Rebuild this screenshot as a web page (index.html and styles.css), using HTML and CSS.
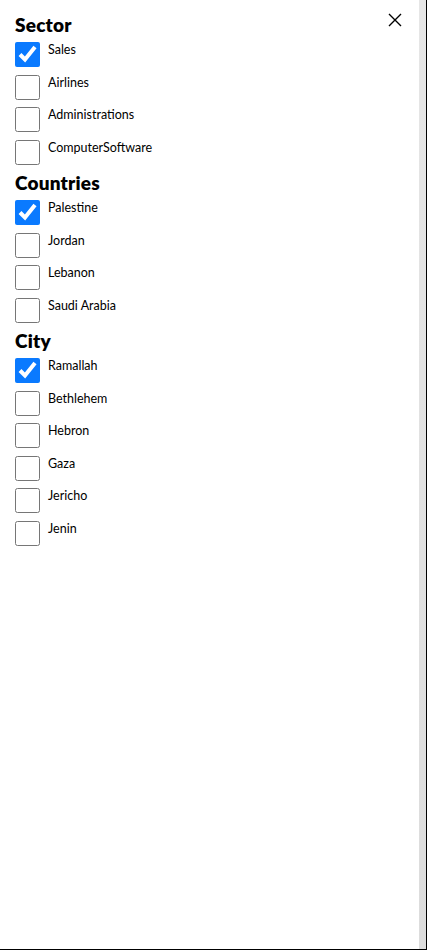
FILE: index.html
```html
<!DOCTYPE html>
<html>
<head>
<meta charset="utf-8">
<link rel="stylesheet" href="styles.css">
</head>
<body>
<div class="panel">
  <div class="content">
    <button class="close" aria-label="close">
      <svg width="14" height="14" viewBox="0 0 14 14"><path d="M1 1L13 13M13 1L1 13" stroke="#000" stroke-width="1.4" fill="none"/></svg>
    </button>
    <section class="group">
      <h2 class="title">Sector</h2>
      <label class="row"><input type="checkbox" checked><span>Sales</span></label>
      <label class="row"><input type="checkbox"><span>Airlines</span></label>
      <label class="row"><input type="checkbox"><span>Administrations</span></label>
      <label class="row"><input type="checkbox"><span>ComputerSoftware</span></label>
    </section>
    <section class="group">
      <h2 class="title">Countries</h2>
      <label class="row"><input type="checkbox" checked><span>Palestine</span></label>
      <label class="row"><input type="checkbox"><span>Jordan</span></label>
      <label class="row"><input type="checkbox"><span>Lebanon</span></label>
      <label class="row"><input type="checkbox"><span>Saudi Arabia</span></label>
    </section>
    <section class="group">
      <h2 class="title">City</h2>
      <label class="row"><input type="checkbox" checked><span>Ramallah</span></label>
      <label class="row"><input type="checkbox"><span>Bethlehem</span></label>
      <label class="row"><input type="checkbox"><span>Hebron</span></label>
      <label class="row"><input type="checkbox"><span>Gaza</span></label>
      <label class="row"><input type="checkbox"><span>Jericho</span></label>
      <label class="row"><input type="checkbox"><span>Jenin</span></label>
    </section>
  </div>
  <div class="rail"></div>
</div>
</body>
</html>
```
FILE: styles.css
```css
html, body {
  margin: 0;
  padding: 0;
  background: #fff;
}
.panel {
  width: 427px;
  height: 950px;
  box-sizing: border-box;
  display: flex;
  border-right: 1px solid #000;
  border-bottom: 1px solid #000;
  font-family: Lato, "Liberation Sans", sans-serif;
  color: #000;
}
.content {
  flex: 1;
  position: relative;
  padding: 14px 15px 0 15px;
}
.rail {
  width: 7px;
  background: linear-gradient(#e6e6e6, #dcdcdc);
}
.close {
  position: absolute;
  top: 13px;
  right: 17px;
  border: 0;
  background: none;
  padding: 0;
  width: 14px;
  height: 14px;
  display: block;
}
.close svg { display: block; }
.group {
  display: flex;
  flex-direction: column;
}
.title {
  margin: 0 0 7px 0;
  font-size: 19px;
  line-height: 21px;
  font-weight: 800;
  letter-spacing: 0.2px;
}
.row {
  display: flex;
  align-items: flex-start;
  gap: 9px;
  height: 32.5px;
}
.row input {
  margin: 0;
  width: 25px;
  height: 25px;
  accent-color: #0a7aff;
}
.row span {
  font-size: 12.5px;
  line-height: 16px;
  margin-top: 0;
  margin-left: -1px;
  font-weight: 400;
}
```
